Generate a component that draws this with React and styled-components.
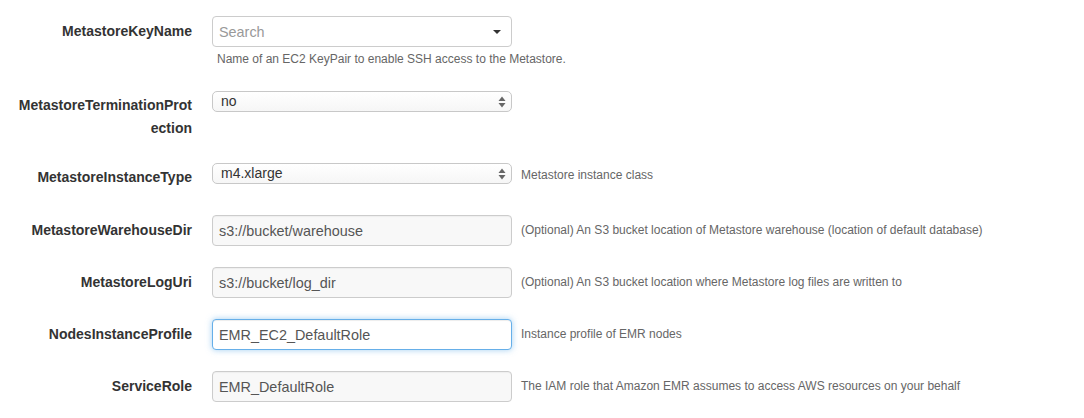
import React from "react";
import styled, { createGlobalStyle } from "styled-components";

const Global = createGlobalStyle`
  html, body { margin: 0; padding: 0; background: #fff; }
  body { font-family: "Liberation Sans", Arial, Helvetica, sans-serif; color: #333; }
  * { box-sizing: border-box; }
`;

const Form = styled.div`
  display: flex;
  flex-direction: column;
  padding-top: 16px;
  width: 1084px;
`;

const Row = styled.div`
  display: grid;
  grid-template-columns: 192px 300px auto;
  column-gap: 20px;
  align-items: start;
  margin-bottom: ${(p) => p.$mb || 21}px;
  & > :nth-child(3) { margin-left: -11px; }
`;

const Label = styled.div`
  font-weight: bold;
  font-size: 14px;
  text-align: right;
  color: #333;
  line-height: ${(p) => p.$lh || 31}px;
  padding-top: ${(p) => p.$pt || 0}px;
  padding-left: 17px;
  word-break: break-all;
`;

const ControlCol = styled.div`
  display: flex;
  flex-direction: column;
`;

const TextInput = styled.div`
  height: 31px;
  border: 1px solid ${(p) => (p.$focus ? "#66afe9" : "#ccc")};
  border-radius: 4px;
  background: ${(p) => (p.$focus ? "#fff" : "#f8f8f8")};
  box-shadow: ${(p) =>
    p.$focus
      ? "inset 0 1px 1px rgba(0,0,0,.075), 0 0 6px rgba(102,175,233,.6)"
      : "inset 0 1px 1px rgba(0,0,0,.04)"};
  font-size: 14.4px;
  line-height: 30px;
  padding: 0 6px;
  color: ${(p) => (p.$placeholder ? "#999" : "#555")};
  position: relative;
  white-space: nowrap;
`;

const SearchBox = styled(TextInput)`
  background: #fff;
  box-shadow: none;
`;

const Caret = styled.span`
  position: absolute;
  right: 10px;
  top: 13px;
  width: 0;
  height: 0;
  border-left: 4px solid transparent;
  border-right: 4px solid transparent;
  border-top: 4px solid #333;
`;

const Select = styled.div`
  height: 21px;
  border: 1px solid #c8c8c8;
  border-radius: 5px;
  background: linear-gradient(#fff, #f6f6f6);
  font-size: 14px;
  line-height: 19px;
  padding: 0 8px;
  color: #333;
  position: relative;
`;

const Arrows = styled.svg`
  position: absolute;
  right: 5px;
  top: 4px;
`;

const HelpBelow = styled.div`
  font-size: 12px;
  color: #666;
  line-height: 15px;
  margin-top: 5px;
  padding-left: 5px;
  white-space: nowrap;
`;

const HelpSide = styled.div`
  font-size: 12px;
  color: #666;
  line-height: ${(p) => p.$lh || 31}px;
  padding-top: ${(p) => p.$pt || 0}px;
  white-space: nowrap;
`;

const UpDown = () => (
  <Arrows width="8" height="12" viewBox="0 0 8 12">
    <path d="M4 0.5 L7.5 5 H0.5 Z" fill="#666" />
    <path d="M4 11.5 L7.5 7 H0.5 Z" fill="#666" />
  </Arrows>
);

export default function App() {
  return (
    <>
      <Global />
      <Form>
        <Row $mb={24}>
          <Label>MetastoreKeyName</Label>
          <ControlCol>
            <SearchBox $placeholder>
              Search
              <Caret />
            </SearchBox>
            <HelpBelow>Name of an EC2 KeyPair to enable SSH access to the Metastore.</HelpBelow>
          </ControlCol>
          <div />
        </Row>
        <Row $mb={23}>
          <Label $lh={23} $pt={3}>MetastoreTerminationProtection</Label>
          <Select>
            no
            <UpDown />
          </Select>
          <div />
        </Row>
        <Row $mb={27}>
          <Label $lh={21} $pt={4}>MetastoreInstanceType</Label>
          <Select>
            m4.xlarge
            <UpDown />
          </Select>
          <HelpSide $lh={20} $pt={2}>Metastore instance class</HelpSide>
        </Row>
        <Row>
          <Label>MetastoreWarehouseDir</Label>
          <TextInput>s3://bucket/warehouse</TextInput>
          <HelpSide>(Optional) An S3 bucket location of Metastore warehouse (location of default database)</HelpSide>
        </Row>
        <Row>
          <Label>MetastoreLogUri</Label>
          <TextInput>s3://bucket/log_dir</TextInput>
          <HelpSide>(Optional) An S3 bucket location where Metastore log files are written to</HelpSide>
        </Row>
        <Row>
          <Label>NodesInstanceProfile</Label>
          <TextInput $focus>EMR_EC2_DefaultRole</TextInput>
          <HelpSide>Instance profile of EMR nodes</HelpSide>
        </Row>
        <Row>
          <Label>ServiceRole</Label>
          <TextInput>EMR_DefaultRole</TextInput>
          <HelpSide>The IAM role that Amazon EMR assumes to access AWS resources on your behalf</HelpSide>
        </Row>
      </Form>
    </>
  );
}
